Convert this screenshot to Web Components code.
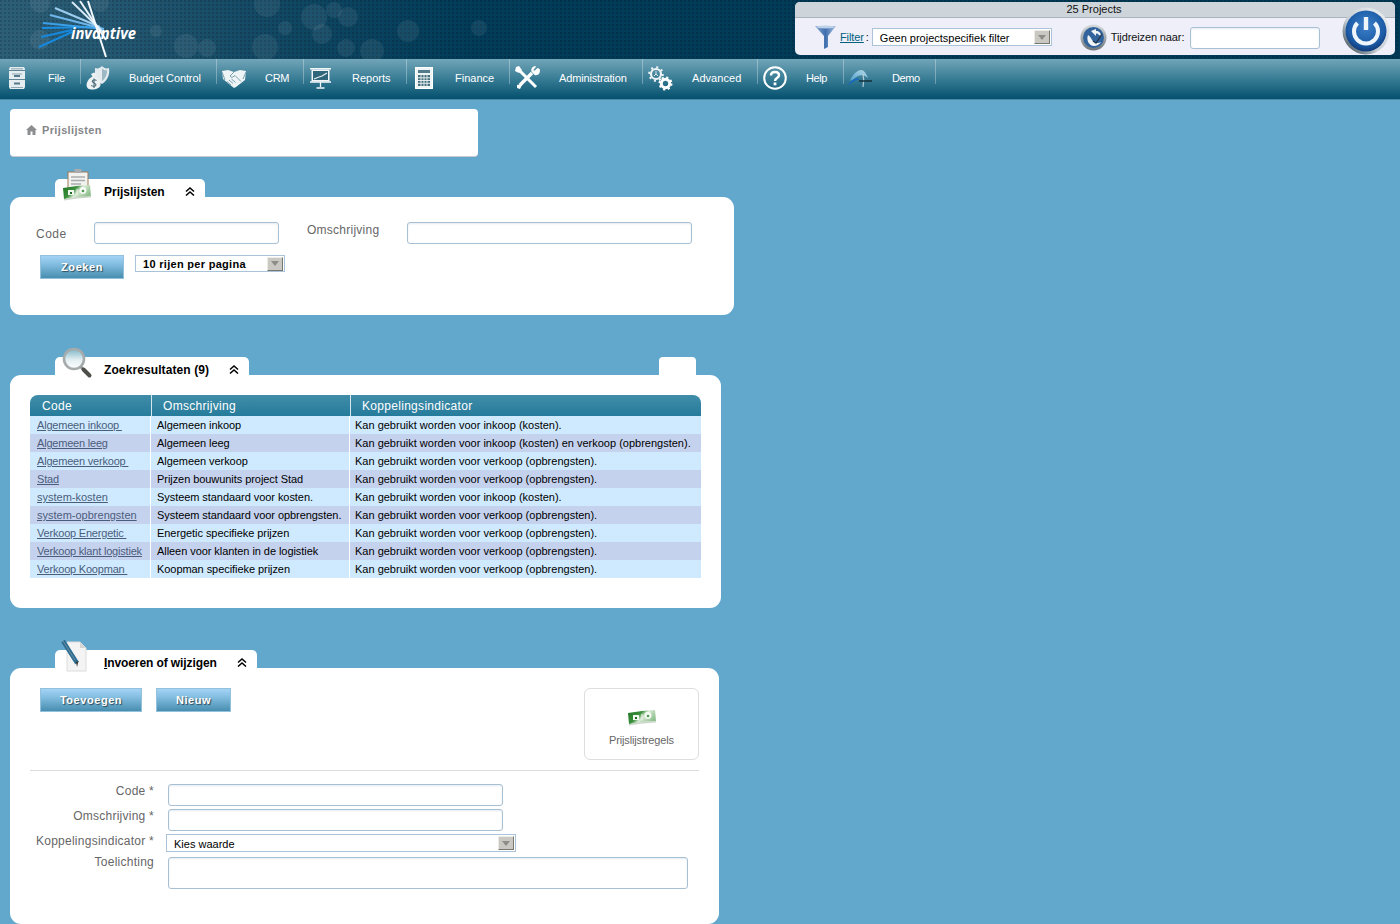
<!DOCTYPE html>
<html lang="nl">
<head>
<meta charset="utf-8">
<title>Prijslijsten</title>
<style>
  html, body { margin: 0; height: 924px; overflow: hidden; }
  body { background: #62a7cc; font-family: "Liberation Sans", Arial, sans-serif; font-size: 11px; }
  main { display: block; padding: 9px 0 0 10px; }
  price-panel { margin-top: 22px; }
  price-panel + price-panel { margin-top: 42px; }
</style>
</head>
<body>
<app-header></app-header>
<app-nav>
  <nav-item icon="cabinet" width="81" style="letter-spacing:-.2px">File</nav-item>
  <nav-item icon="budget" width="136" style="letter-spacing:-.12px">Budget Control</nav-item>
  <nav-item icon="handshake" width="87" style="letter-spacing:-.3px">CRM</nav-item>
  <nav-item icon="board" width="103">Reports</nav-item>
  <nav-item icon="calculator" width="103">Finance</nav-item>
  <nav-item icon="tools" width="133" style="letter-spacing:-.15px;--gap:15px">Administration</nav-item>
  <nav-item icon="gears" width="115" style="letter-spacing:.05px;--gap:15px">Advanced</nav-item>
  <nav-item icon="help" width="86" style="letter-spacing:-.4px">Help</nav-item>
  <nav-item icon="demo" width="92" style="letter-spacing:-.4px">Demo</nav-item>
</app-nav>
<main>
  <crumb-box>Prijslijsten</crumb-box>
  <price-panel heading="Prijslijsten" icon="clipboard" style="width:724px">
    <search-form></search-form>
  </price-panel>
  <price-panel heading="Zoekresultaten (9)" icon="magnifier" style="width:711px;--name-spacing:.1px">
    <span slot="extra" class="blank"></span>
    <result-table></result-table>
  </price-panel>
  <price-panel heading="&lt;u&gt;I&lt;/u&gt;nvoeren of wijzigen" icon="document" style="width:709px;--name-spacing:-.1px">
    <edit-form></edit-form>
  </price-panel>
</main>

<script>
const MONEY = `
  <defs><linearGradient id="bill" x1="0" x2="1" y1="0" y2=".5">
    <stop offset="0" stop-color="#1c7420"/><stop offset=".45" stop-color="#3b8f3d"/><stop offset=".62" stop-color="#d9ead5"/><stop offset="1" stop-color="#8fc08f"/>
  </linearGradient></defs>
  <path d="M0 3l14-2 13-1 1 11-14 1-13 2z" fill="url(#bill)"/>
  <path d="M1 14l13-2 14-1v1.500l-14 1-13 2z" fill="#c9d6c8"/>
  <rect x="5" y="5" width="6" height="5" fill="#f1f6ef"/>
  <rect x="7" y="7" width="2" height="2" fill="#1c6a22"/>
  <circle cx="20" cy="5.500" r="3.400" fill="#f6faf4"/>
  <circle cx="20" cy="6" r="1.300" fill="#4d9a50"/>
  <path d="M14 4v6" stroke="#e8f2e4" stroke-width="1"/>`;

// all icons are drawn here, the viewbox says how big they are
const ICONS = {
  cabinet: `<svg viewBox="0 0 16 22" width="16" height="22">
    <path d="M1 0h14l1 2v18l-1 2H1l-1-2V2z" fill="#e6edf0"/>
    <path d="M0 3.500h16M0 12.500h16" stroke="#5f8594" stroke-width="1"/>
    <rect x="2" y="1" width="12" height="1.500" fill="#a8bdc6"/>
    <rect x="3" y="6.500" width="10" height="1" fill="#8aa4af"/>
    <rect x="5" y="8" width="6" height="2" fill="#55798a"/>
    <rect x="5" y="15.500" width="6" height="2" fill="#55798a"/>
    <path d="M2 20.500h12" stroke="#8ea7b2"/></svg>`,
  budget: `<svg viewBox="0 0 24 26" width="24" height="26">
    <path d="M9 3c3 1 5 0 7-2 2 2 4 3 7 2 1 6-1 12-7 16-4-2-6-5-7-9z" fill="#e3ebee"/>
    <path d="M16 3.500c1.500 1.500 3 2 5 1.700.3 4.500-1.500 8-5 11z" fill="#9db8c3"/>
    <path d="M5 9l3-1.500 3 1.500-1.500 2.500C13 13 15 17 14.500 20c-.5 4-9 6-12.500 3.500C-1 21 1 14 6.500 11.500z" fill="#eef2f3"/>
    <path d="M10.500 15.500c-1.500-1.300-4-1-4.200.7S10.300 18 10 19.800 7 21.800 5.200 20.300M8 13.500v9.500" fill="none" stroke="#4a6975" stroke-width="1.100"/></svg>`,
  handshake: `<svg viewBox="0 0 24 19" width="24" height="19">
    <path d="M0 2l6-1 6 2 6-2 6 1-1 9-9 7-2 1-5-4-6-5z" fill="#eef4f6"/>
    <path d="M12 3L8 7l2 1.500 3-2 6 6M7 11l4 3.500M5 12.500l4 3.500M9.500 10l4 3.500M0 3l3 8M24 3l-3 7" fill="none" stroke="#6d97a8" stroke-width=".9"/></svg>`,
  board: `<svg viewBox="0 0 22 22" width="22" height="22">
    <rect x="0" y="1" width="21" height="1.500" fill="#f2f6f7"/>
    <rect x="1.500" y="2.500" width="18" height="12" fill="#f2f6f7"/>
    <rect x="3" y="4" width="15" height="9" fill="#2f6679"/>
    <path d="M4 12l5-2 3-1 5-3" stroke="#e7f0f2" stroke-width="1.200" fill="none"/>
    <path d="M0 15h21M10.500 15v5M6.500 21h8" stroke="#f2f6f7" stroke-width="1.300"/></svg>`,
  calculator: `<svg viewBox="0 0 18 22" width="18" height="22">
    <rect x=".5" y=".5" width="17" height="21" fill="#eef3f4" stroke="#fff"/>
    <rect x="3" y="3" width="12" height="3" fill="#517b8a"/>
    <path d="M3 8h12v11H3z" fill="#46707f"/>
    <path d="M6 8v11M9 8v11M12 8v11M3 10.800h12M3 13.500h12M3 16.300h12" stroke="#eef3f4" stroke-width=".9"/></svg>`,
  tools: `<svg viewBox="0 0 24 24" width="24" height="24">
    <path d="M3 3l9 9M12 12l9 9" stroke="#fff" stroke-width="3"/>
    <path d="M1 1l3-1 3 4-3 3-4-2z" fill="#fff"/>
    <path d="M5 19L17 7" stroke="#fff" stroke-width="3.400"/>
    <path d="M22.500 2l-3.300 3 .2 0-1-1 2.800-3.500c-3-1-6 2-4.500 5.500l3 3c3.500 1 6-2 5-6z" fill="#fff"/>
    <path d="M6 18l-4 1 0 3 3 1 2-4z" fill="#fff"/></svg>`,
  gears: `<svg viewBox="0 0 24 24" width="24" height="24">
    <g fill="none" stroke="#eef3f5">
      <circle cx="8" cy="8" r="5" stroke-width="2.200"/>
      <circle cx="8" cy="8" r="6.800" stroke-width="2" stroke-dasharray="2 3.340"/>
    </g>
    <path d="M8 5v4M6 10l2-2 2 2" stroke="#dfe8eb" fill="none"/>
    <circle cx="17.500" cy="17.500" r="4.200" fill="none" stroke="#fff" stroke-width="3"/>
    <circle cx="17.500" cy="17.500" r="6" fill="none" stroke="#fff" stroke-width="2" stroke-dasharray="2.200 2.510"/></svg>`,
  help: `<svg viewBox="0 0 24 24" width="24" height="24">
    <circle cx="12" cy="12" r="10.800" fill="none" stroke="#fff" stroke-width="2"/>
    <path d="M8 9.500C8 7 10 6 12 6c2.400 0 4 1.400 4 3.300 0 2.800-4 2.800-4 5.700" fill="none" stroke="#fff" stroke-width="2.400"/>
    <rect x="10.600" y="16.500" width="2.800" height="2.800" fill="#fff"/></svg>`,
  demo: `<svg viewBox="0 0 24 18" width="24" height="18">
    <defs><linearGradient id="dg" x1="0" x2="1" y1="1" y2="0"><stop offset="0" stop-color="#4f9fd0"/><stop offset="1" stop-color="#b9dbe6"/></linearGradient></defs>
    <path d="M1 12C3 6 8 1 12 1c3 0 5 3 7 8l-3-2c-3-2-9 0-11 3z" fill="url(#dg)"/>
    <path d="M0 15c3-3 6-5 10-5" stroke="#1669c2" stroke-width="1.600" fill="none"/>
    <path d="M14 5c1 4 1 8 0 13" stroke="#b7cfdb" stroke-width="1.200" fill="none"/>
    <path d="M10 12h13" stroke="#14303c" stroke-width="1.500"/></svg>`,
  funnel: `<svg viewBox="0 0 21 24" width="21" height="24">
    <defs><linearGradient id="fg" x1="0" x2="1"><stop offset="0" stop-color="#8aa9d3"/><stop offset=".5" stop-color="#3f6fae"/><stop offset="1" stop-color="#a9c3e0"/></linearGradient></defs>
    <path d="M0 1h21L13 11v11l-4 2V11z" fill="url(#fg)"/>
    <ellipse cx="10.500" cy="2" rx="9.500" ry="1.500" fill="#bcd0ea"/></svg>`,
  globe: `<svg viewBox="0 0 27 27" width="27" height="27">
    <defs><linearGradient id="rim" x1="0" y1="0" x2="0" y2="1"><stop offset="0" stop-color="#d9dde0"/><stop offset="1" stop-color="#6c7479"/></linearGradient></defs>
    <circle cx="13.500" cy="13.500" r="13" fill="url(#rim)"/>
    <circle cx="13.500" cy="13.500" r="10.500" fill="#33639c"/>
    <path d="M8 11c-2 5 1 11 6 11 3 0 6-2 7-4-3 2-7 1-9-2-1-2-2-4-4-5z" fill="#f0f4f7"/>
    <path d="M11 7l5-2v2c3 0 5 2 5 5l-2-1c-1-1-2-2-3-1v2z" fill="#f0f4f7"/>
    <path d="M13 17l3 2 6-9" fill="none" stroke="#26384a" stroke-width="1.300"/></svg>`,
  power: `<svg viewBox="0 0 50 50" width="50" height="50">
    <defs>
      <radialGradient id="pg" cx=".5" cy=".38" r=".62"><stop offset="0" stop-color="#3c80c8"/><stop offset=".75" stop-color="#1b5aa6"/><stop offset="1" stop-color="#0f3b78"/></radialGradient>
      <linearGradient id="pr" x1="1" y1="0" x2="0" y2="1"><stop offset="0" stop-color="#f2f4f6"/><stop offset=".6" stop-color="#c3ccd2"/><stop offset="1" stop-color="#20323e"/></linearGradient>
    </defs>
    <circle cx="24" cy="25" r="23.500" fill="url(#pr)"/>
    <circle cx="24" cy="25" r="20.500" fill="url(#pg)"/>
    <path d="M15.500 17a12 12 0 1 0 17 0" fill="none" stroke="#eef5fb" stroke-width="4"/>
    <path d="M24 11v13" stroke="#eef5fb" stroke-width="4.400"/></svg>`,
  clipboard: `<svg viewBox="0 0 30 32" width="30" height="32">
    <rect x="6" y="3" width="20" height="24" fill="#f2f2ef" stroke="#9c7a58"/>
    <rect x="12.500" y="0" width="7" height="4" fill="#a8acae"/>
    <path d="M9 8h14M9 11.500h14M9 15h10" stroke="#a9acae" stroke-width="1.300"/>
    <g transform="translate(1 16)">${MONEY}</g></svg>`,
  magnifier: `<svg viewBox="0 0 30 32" width="30" height="32">
    <defs><linearGradient id="mg" x1="0" y1="0" x2="0" y2="1"><stop offset="0" stop-color="#7eb6c9"/><stop offset=".55" stop-color="#e4eff2"/><stop offset="1" stop-color="#fff"/></linearGradient></defs>
    <circle cx="12" cy="12" r="10" fill="url(#mg)" stroke="#a6abac" stroke-width="2.600"/>
    <path d="M19 20l3 3" stroke="#8f9596" stroke-width="3"/>
    <path d="M21.500 22.500l6 6" stroke="#4e4e4a" stroke-width="4" stroke-linecap="round"/></svg>`,
  document: `<svg viewBox="0 0 26 32" width="26" height="32">
    <path d="M5 2h13l6 6v23H5z" fill="#f4f4f4" stroke="#dcdcdc"/>
    <path d="M18 2v6h6z" fill="#d6d6d6"/>
    <path d="M1 1l14 22" stroke="#2e6d92" stroke-width="4.200"/>
    <path d="M1 1l12 19" stroke="#6c8fa3" stroke-width="1"/>
    <path d="M14 22l1 5 1.500-6z" fill="#39352f"/></svg>`,
  money: `<svg viewBox="0 0 28 16" width="28" height="16">${MONEY}</svg>`,
  home: `<svg viewBox="0 0 11 10" width="11" height="10">
    <path d="M5.500 0L11 5H9.500v5H6.500V6.500h-2V10h-3V5H0z" fill="#8b8d8f"/></svg>`
};

class AppIcon extends HTMLElement {
  constructor() {
    super();
    this.attachShadow({mode: 'open'}).innerHTML = `
      <style>:host { display: inline-flex; line-height: 0; } svg { display: block; overflow: visible; }</style>
      ${ICONS[this.getAttribute('name')] || ''}`;
  }
}

class AppHeader extends HTMLElement {
  constructor() {
    super();
    const bubbles = [[40,3,10],[100,3,9],[40,40,10],[186,46,12],[207,48,9],[156,31,6],[267,4,13],[265,47,13],[285,28,7],
      [314,17,13],[334,10,8],[348,17,10],[322,34,10],[346,48,9],[372,51,12],[408,31,11],[479,28,8]];
    // from the far end of each ray to the point where the fan comes together
    const rays = [[39,47,72,32,'#1689df'],[41,37,72,30,'#1689df'],[42,28,100,27,'#1b8ee2'],[43,23,104,29,'#3ba0e8'],[50,15,104,29,'#6db6ea'],
      [55,8,100,27,'#9ccdee'],[72,2,104,33,'#d3e8f6'],[80,1,106,40,'#e9f4fb'],[88,1,106,57,'#f5fafd']];
    this.attachShadow({mode: 'open'}).innerHTML = `
      <style>
        :host {
          display: flex; justify-content: flex-end; position: relative; height: 59px; box-sizing: border-box;
          padding: 2px 5px 4px 0; overflow: hidden;
          background:
            radial-gradient(circle at 1px 1px, rgba(0,0,0,.16) 1px, transparent 1.2px) 0 0 / 4px 4px,
            linear-gradient(90deg, #2d5f78 0, #235670 120px, #0f4662 300px, #023c59 470px, #003a56);
        }
        svg.art { position: absolute; left: 0; top: 0; }
        text { font: italic bold 16px "Open Sans", "Liberation Sans", sans-serif; fill: #fff; }
        filter-box { position: relative; }
      </style>
      <svg class="art" width="560" height="59">
        ${bubbles.map(b => `<circle cx="${b[0]}" cy="${b[1]}" r="${b[2]}" fill="#fff" opacity=".07"/>`).join('')}
        ${rays.map(r => `<path d="M${r[0]} ${r[1]}L${r[2]} ${r[3]}" stroke="${r[4]}" stroke-width="2"/>`).join('')}
        <text x="71" y="39" textLength="65" lengthAdjust="spacingAndGlyphs">invantive</text>
      </svg>
      <filter-box></filter-box>`;
  }
}

class FilterBox extends HTMLElement {
  constructor() {
    super();
    this.attachShadow({mode: 'open'}).innerHTML = `
      <style>
        :host {
          display: block; width: 600px; box-sizing: border-box; background: #eeeff8; border-radius: 5px; overflow: visible;
          color: #111; font: 11px "Liberation Sans", Arial, sans-serif;
        }
        .title {
          height: 15px; line-height: 15px; text-align: center; background: #cdd5da; border-bottom: 1px solid #a9b4ba;
          border-radius: 5px 5px 0 0; padding-right: 2px;
        }
        .row { display: flex; align-items: center; height: 36px; padding: 1px 0 0 20px; }
        a { color: #00607e; text-decoration: underline; margin-left: 4px; letter-spacing: -.1px; }
        .colon { margin-left: 2px; width: 6px; }
        ui-select { width: 180px; height: 18px; --text-top: 1px; }
        app-icon[name=globe] { margin-left: 28px; }
        .lbl { margin-left: 4px; width: 79px; letter-spacing: -.12px; }
        ui-input { width: 130px; height: 22px; margin-top: 2px; }
        .power { position: absolute; right: 3px; top: 4px; }
      </style>
      <div class="title">25 Projects</div>
      <div class="row">
        <app-icon name="funnel"></app-icon><a>Filter</a><span class="colon">:</span>
        <ui-select>Geen projectspecifiek filter</ui-select>
        <app-icon name="globe"></app-icon><span class="lbl">Tijdreizen naar:</span>
        <ui-input></ui-input>
      </div>
      <app-icon class="power" name="power"></app-icon>`;
  }
}

class AppNav extends HTMLElement {
  constructor() {
    super();
    this.attachShadow({mode: 'open'}).innerHTML = `
      <style>
        :host {
          display: flex; height: 41px; box-sizing: border-box; border-bottom: 1px solid #4a88a3;
          background: linear-gradient(#72a5b8, #3d8098 45%, #04506e);
        }
      </style>
      <slot></slot>`;
  }
}

class NavItem extends HTMLElement {
  constructor() {
    super();
    this.attachShadow({mode: 'open'}).innerHTML = `
      <style>
        :host {
          display: flex; align-items: center; box-sizing: border-box; height: 38px; width: ${this.getAttribute('width')}px;
          color: #fff; font: 11px "Liberation Sans", Arial, sans-serif;
          background: linear-gradient(rgba(255,255,255,.3), rgba(255,255,255,.3)) right top / 1px 25px no-repeat;
        }
        .ic { width: 34px; margin-right: var(--gap, 14px); display: flex; justify-content: center; }
      </style>
      <span class="ic"><app-icon name="${this.getAttribute('icon')}"></app-icon></span>
      <slot></slot>`;
  }
}

class CrumbBox extends HTMLElement {
  constructor() {
    super();
    this.attachShadow({mode: 'open'}).innerHTML = `
      <style>
        :host {
          display: flex; align-items: center; gap: 5px; width: 468px; height: 48px; box-sizing: border-box;
          padding: 0 0 6px 16px; background: #fff; border-radius: 4px; border-bottom: 1px solid #c6ccd2;
          color: #85878a; font: bold 11px "Liberation Sans", Arial, sans-serif; letter-spacing: .35px;
        }
      </style>
      <app-icon name="home"></app-icon><slot></slot>`;
  }
}

class PricePanel extends HTMLElement {
  constructor() {
    super();
    this.attachShadow({mode: 'open'}).innerHTML = `
      <style>
        :host { display: block; }
        .tabs { display: flex; justify-content: space-between; height: 18px; padding: 0 25px 0 45px; }
        .tab {
          position: relative; display: flex; align-items: center; box-sizing: border-box; padding: 8px 10px 0 49px;
          background: #fff; border-radius: 5px 5px 0 0; color: #000;
          font: bold 12px "Liberation Sans", Arial, sans-serif;
        }
        .tab app-icon { position: absolute; left: 7px; bottom: -4px; }
        .name { white-space: nowrap; letter-spacing: var(--name-spacing, 0); }
        .chev { margin-left: 20px; margin-top: -1px; }
        ::slotted(.blank) { display: block; width: 37px; height: 18px; background: #fff; border-radius: 4px 4px 0 0; }
        .card { background: #fff; border-radius: 11px; }
      </style>
      <div class="tabs">
        <div class="tab">
          <app-icon name="${this.getAttribute('icon')}"></app-icon>
          <span class="name">${this.getAttribute('heading')}</span>
          <svg class="chev" width="10" height="9" viewBox="0 0 10 9"><path d="M1 4.500L5 1l4 3.500M1 8.500L5 5l4 3.500" fill="none" stroke="#000" stroke-width="1.500"/></svg>
        </div>
        <slot name="extra"></slot>
      </div>
      <div class="card"><slot></slot></div>`;
  }
}

class UiInput extends HTMLElement {
  constructor() {
    super();
    this.attachShadow({mode: 'open'}).innerHTML = `
      <style>
        :host {
          display: block; box-sizing: border-box; border: 1px solid #a8c0d4; border-radius: 3px; background: #fff;
          box-shadow: inset 0 1px 2px rgba(150,175,195,.25);
        }
      </style>`;
  }
}

class UiSelect extends HTMLElement {
  constructor() {
    super();
    this.attachShadow({mode: 'open'}).innerHTML = `
      <style>
        :host {
          display: flex; align-items: center; justify-content: space-between; box-sizing: border-box;
          border: 1px solid #aac3d8; background: #fff; padding: 0 1px 0 7px; color: #000;
          font: 11px "Liberation Sans", Arial, sans-serif; white-space: nowrap;
        }
        span.txt { padding-top: var(--text-top, 0); }
        .btn {
          display: flex; align-items: center; justify-content: center; box-sizing: border-box; width: 16px; height: 14px;
          background: #c9c8c2; border: 1px solid; border-color: #ecebe6 #77766f #77766f #ecebe6;
        }
        .btn i { width: 0; height: 0; border: 4px solid transparent; border-top: 5px solid #8d8d88; border-bottom: 0; }
      </style>
      <span class="txt"><slot></slot></span><span class="btn"><i></i></span>`;
  }
}

class UiButton extends HTMLElement {
  constructor() {
    super();
    this.attachShadow({mode: 'open'}).innerHTML = `
      <style>
        :host {
          display: flex; align-items: center; justify-content: center; box-sizing: border-box; height: 24px;
          border: 1px solid #93c0da; background: linear-gradient(#a4d3f5, #82bde0 38%, #488eb0);
          color: #fff; font: bold 11px "Liberation Sans", Arial, sans-serif; letter-spacing: .55px;
          text-shadow: 1px 1px 1px #2c4a5a;
        }
      </style>
      <slot></slot>`;
  }
}

class SearchForm extends HTMLElement {
  constructor() {
    super();
    this.attachShadow({mode: 'open'}).innerHTML = `
      <style>
        :host {
          display: block; height: 118px; box-sizing: border-box; padding: 25px 0 0 26px;
          color: #666; font: 12px "Liberation Sans", Arial, sans-serif; letter-spacing: .5px;
        }
        .row { display: flex; }
        .code { width: 58px; padding-top: 5px; }
        .oms { width: 100px; margin-left: 28px; padding-top: 1px; letter-spacing: .25px; }
        ui-input { height: 22px; }
        .second { margin: 11px 0 0 4px; gap: 11px; align-items: flex-start; }
        ui-button { width: 84px; }
        ui-select { width: 150px; height: 17px; font-weight: bold; letter-spacing: .3px; }
      </style>
      <div class="row">
        <span class="code">Code</span><ui-input style="width:185px"></ui-input>
        <span class="oms">Omschrijving</span><ui-input style="width:285px"></ui-input>
      </div>
      <div class="row second">
        <ui-button>Zoeken</ui-button>
        <ui-select>10 rijen per pagina</ui-select>
      </div>`;
  }
}

class ResultTable extends HTMLElement {
  constructor() {
    super();
    const inkoop = 'Kan gebruikt worden voor inkoop (kosten).';
    const verkoop = 'Kan gebruikt worden voor verkoop (opbrengsten).';
    const rows = [
      ['Algemeen inkoop ', 'Algemeen inkoop', inkoop],
      ['Algemeen leeg', 'Algemeen leeg', 'Kan gebruikt worden voor inkoop (kosten) en verkoop (opbrengsten).'],
      ['Algemeen verkoop ', 'Algemeen verkoop', verkoop],
      ['Stad', 'Prijzen bouwunits project Stad', verkoop],
      ['system-kosten', 'Systeem standaard voor kosten.', inkoop],
      ['system-opbrengsten', 'Systeem standaard voor opbrengsten.', verkoop],
      ['Verkoop Energetic ', 'Energetic specifieke prijzen', verkoop],
      ['Verkoop klant logistiek', 'Alleen voor klanten in de logistiek', verkoop],
      ['Verkoop Koopman ', 'Koopman specifieke prijzen', verkoop]
    ];
    this.attachShadow({mode: 'open'}).innerHTML = `
      <style>
        :host { display: block; padding: 20px 20px 30px; font: 11px "Liberation Sans", Arial, sans-serif; }
        table { table-layout: fixed; width: 671px; border-collapse: separate; border-spacing: 0; }
        th {
          height: 21px; padding: 1px 0 0 11px; box-sizing: border-box; text-align: left; font: 12px "Liberation Sans", Arial, sans-serif;
          letter-spacing: .3px; color: #fff; background: linear-gradient(#408da9, #267b9b); border-left: 1px solid #d5e6ee;
        }
        th:first-child { border-left: 0; border-top-left-radius: 8px; padding-left: 12px; }
        th:last-child { border-top-right-radius: 8px; }
        td { height: 18px; padding: 0 0 0 6px; box-sizing: border-box; color: #000; white-space: nowrap; background: #cfeafe; border-right: 1px solid #fff; letter-spacing: -.06px; }
        td:first-child { padding-left: 7px; }
        td:last-child { padding-left: 5px; border-right: 0; letter-spacing: 0; }
        tr:nth-child(even) td { background: #c5d2ee; }
        a { color: #4b5d7c; text-decoration: underline; white-space: pre; letter-spacing: -.2px; }
        a.sys { letter-spacing: 0; }
      </style>
      <table>
        <colgroup><col style="width:121px"><col style="width:199px"><col style="width:351px"></colgroup>
        <thead><tr><th>Code</th><th>Omschrijving</th><th>Koppelingsindicator</th></tr></thead>
        <tbody>${rows.map(r => `<tr><td><a class="${r[0].startsWith('system') ? 'sys' : ''}">${r[0]}</a></td><td>${r[1]}</td><td>${r[2]}</td></tr>`).join('')}</tbody>
      </table>`;
  }
}

class EditForm extends HTMLElement {
  constructor() {
    super();
    this.attachShadow({mode: 'open'}).innerHTML = `
      <style>
        :host {
          display: block; height: 256px; box-sizing: border-box; padding: 20px 20px 0;
          color: #666; font: 12px "Liberation Sans", Arial, sans-serif; letter-spacing: .25px;
        }
        .top { display: flex; justify-content: space-between; padding: 0 0 10px 10px; border-bottom: 1px solid #dcdcdc; }
        .btns { display: flex; gap: 14px; align-items: flex-start; }
        .tile {
          display: flex; flex-direction: column; align-items: center; gap: 8px; box-sizing: border-box; width: 115px; height: 72px;
          padding-top: 21px; border: 1px solid #dedede; border-radius: 6px; font-size: 11px; letter-spacing: -.15px;
        }
        .fields { display: grid; grid-template-columns: 124px 1fr; column-gap: 14px; margin-top: 13px; justify-items: start; }
        label { justify-self: end; white-space: nowrap; }
        ui-input { height: 22px; width: 335px; margin-bottom: 3px; }
        ui-select { width: 350px; height: 18px; margin: 0 0 5px -2px; letter-spacing: 0; --text-top: 1px; }
        ui-input.area { width: 520px; height: 32px; margin: 0; }
        .up { margin-top: -2px; }
      </style>
      <div class="top">
        <div class="btns"><ui-button style="width:102px">Toevoegen</ui-button><ui-button style="width:75px">Nieuw</ui-button></div>
        <div class="tile"><app-icon name="money"></app-icon>Prijslijstregels</div>
      </div>
      <div class="fields">
        <label>Code *</label><ui-input></ui-input>
        <label>Omschrijving *</label><ui-input></ui-input>
        <label>Koppelingsindicator *</label><ui-select>Kies waarde</ui-select>
        <label class="up">Toelichting</label><ui-input class="area"></ui-input>
      </div>`;
  }
}

// children first, so a shadow root never holds an element that is not defined yet
customElements.define('app-icon', AppIcon);
customElements.define('ui-input', UiInput);
customElements.define('ui-select', UiSelect);
customElements.define('ui-button', UiButton);
customElements.define('filter-box', FilterBox);
customElements.define('app-header', AppHeader);
customElements.define('app-nav', AppNav);
customElements.define('nav-item', NavItem);
customElements.define('crumb-box', CrumbBox);
customElements.define('price-panel', PricePanel);
customElements.define('search-form', SearchForm);
customElements.define('result-table', ResultTable);
customElements.define('edit-form', EditForm);
</script>
</body>
</html>
